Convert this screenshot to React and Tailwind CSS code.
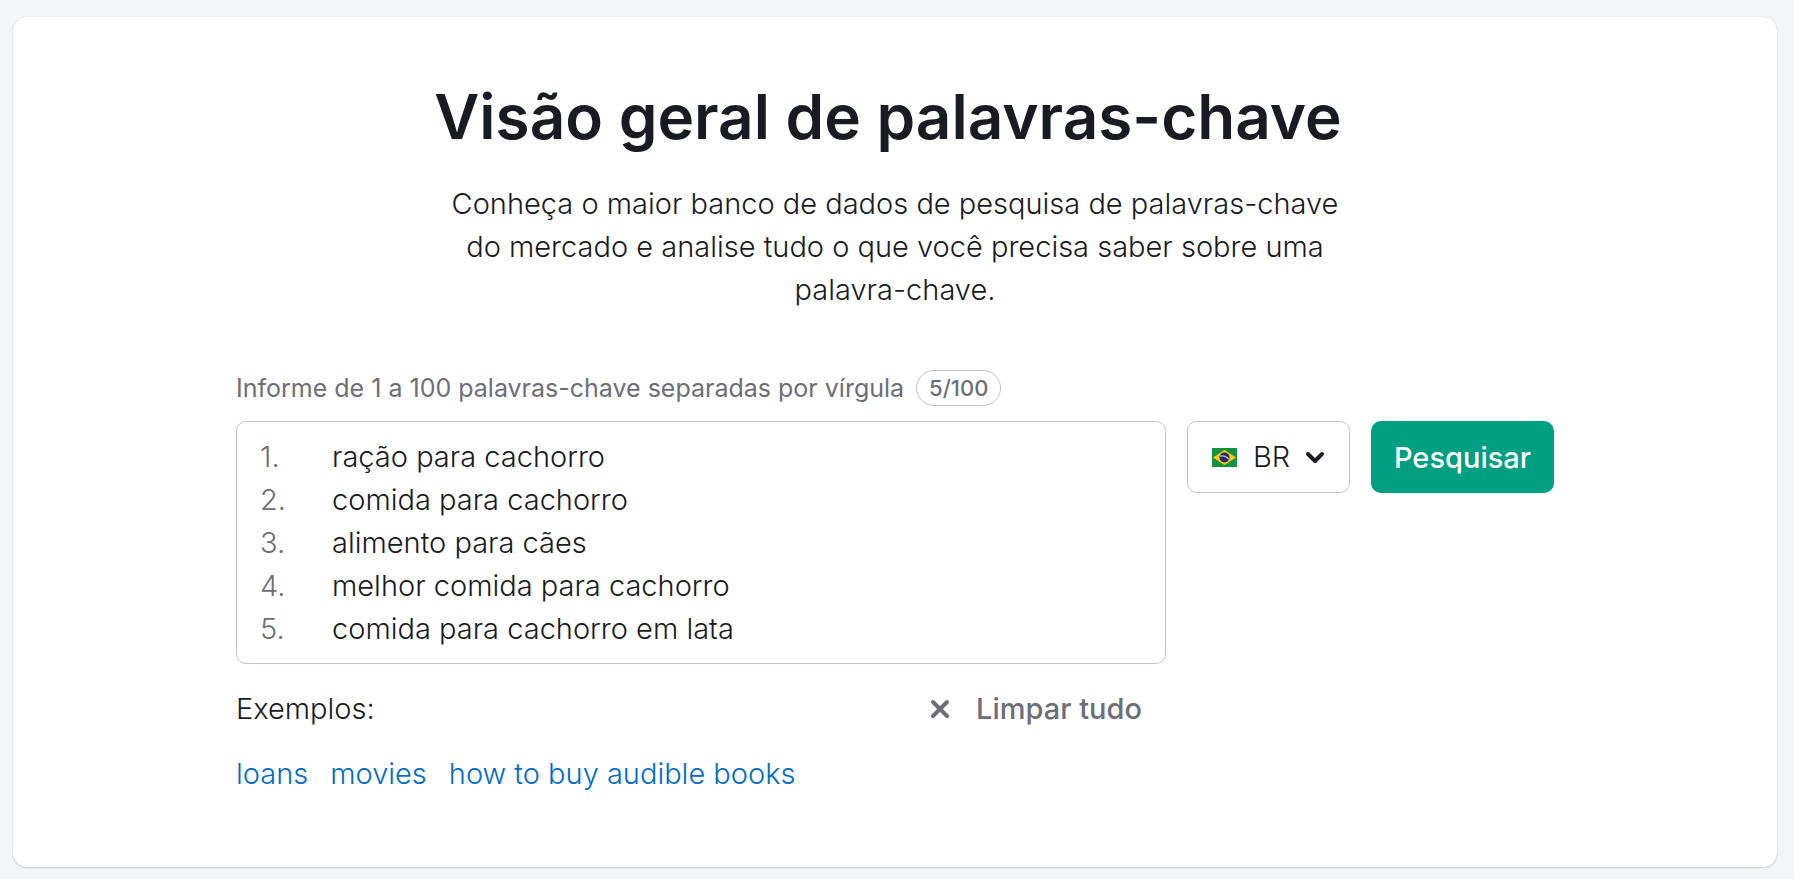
import { useState } from 'react';

const INITIAL_KEYWORDS = [
  'ração para cachorro',
  'comida para cachorro',
  'alimento para cães',
  'melhor comida para cachorro',
  'comida para cachorro em lata',
];

const EXAMPLES = ['loans', 'movies', 'how to buy audible books'];

const MAX_KEYWORDS = 100;

// =========================================================================
// App
//   Tela inicial da visão geral de palavras-chave: título, campo com as
//   palavras-chave numeradas, seletor de país e exemplos clicáveis.
// =========================================================================
export default function App() {
  const [text, setText] = useState(INITIAL_KEYWORDS.join('\n'));
  const [country, setCountry] = useState('BR');

  const lines = text.split('\n');
  const count = lines.filter(l => l.trim()).length;

  return (
    <div className="min-h-screen bg-[#f4f5f9] pt-[17px] pr-[17px] pb-[13px] pl-[13px] font-['Inter',sans-serif] text-[29px] leading-[43px] font-light text-[#191b23]">
      <main className="rounded-[14px] bg-white px-6 pt-[60px] pb-[72px] shadow-[0_0_1px_rgba(25,27,35,0.2),0_1px_2px_rgba(25,27,35,0.16)]">

        {/* Cabeçalho */}
        <header className="text-center">
          <h1 className="pr-[14px] text-[62px] leading-[80px] font-semibold">
            Visão geral de palavras-chave
          </h1>
          <p className="mx-auto mt-[25px] max-w-[900px]">
            Conheça o maior banco de dados de pesquisa de palavras-chave do mercado
            e analise tudo o que você precisa saber sobre uma palavra-chave.
          </p>
        </header>

        <form className="mx-auto mt-[59px] max-w-[1318px]" onSubmit={e => e.preventDefault()}>
          {/* Rótulo + contador */}
          <div className="flex items-center gap-3 text-[25px] leading-9 font-normal text-[#6c6e79]">
            <label htmlFor="keywords">
              Informe de 1 a {MAX_KEYWORDS} palavras-chave separadas por vírgula
            </label>
            <span className="flex h-9 items-center rounded-full border border-[#c4c3cf] px-3 text-[22px] font-medium">
              {count}/{MAX_KEYWORDS}
            </span>
          </div>

          <div className="mt-[15px] flex items-start gap-[21px]">
            <div className="min-w-0 flex-1">
              <div className="flex rounded-[10px] border border-[#c4c3cf] py-[13px] pl-[23px]">
                <ol className="w-[72px] shrink-0 text-[#6c6e79]" aria-hidden="true">
                  {lines.map((_, i) => <li key={i}>{i + 1}.</li>)}
                </ol>
                <textarea
                  id="keywords"
                  rows={Math.max(5, lines.length)}
                  value={text}
                  onChange={e => setText(e.target.value)}
                  spellCheck={false}
                  className="block min-w-0 flex-1 resize-none overflow-hidden bg-transparent outline-none"
                />
              </div>

              <div className="mt-[23px] flex items-center justify-between pr-6">
                <span>Exemplos:</span>
                <button
                  type="button"
                  onClick={() => setText('')}
                  className="flex items-center gap-[26px] font-medium text-[#6c6e79]"
                >
                  <CloseIcon />
                  Limpar tudo
                </button>
              </div>

              <div className="mt-[22px] flex gap-[22px] text-[#006dca]">
                {EXAMPLES.map(example => (
                  <a
                    key={example}
                    href="#"
                    onClick={e => { e.preventDefault(); setText(example); }}
                  >
                    {example}
                  </a>
                ))}
              </div>
            </div>

            {/* País */}
            <label className="flex h-[72px] items-center rounded-[10px] border border-[#c4c3cf] px-6 pb-[2px]">
              <BrazilFlag />
              <select
                aria-label="País"
                value={country}
                onChange={e => setCountry(e.target.value)}
                className="ml-4 w-[52px] appearance-none bg-transparent outline-none"
              >
                <option>BR</option>
                <option>US</option>
                <option>PT</option>
              </select>
              <ChevronIcon />
            </label>

            <button
              type="submit"
              className="h-[72px] rounded-[10px] bg-[#009f81] px-[23px] font-medium text-white"
            >
              Pesquisar
            </button>
          </div>
        </form>
      </main>
    </div>
  );
}

// ── Ícones ──────────────────────────────────────────────────────────────
function CloseIcon() {
  return (
    <svg className="h-5 w-5" viewBox="0 0 20 20" fill="none" stroke="currentColor" strokeWidth="4" strokeLinecap="round" aria-hidden="true">
      <path d="M3 3l14 14M17 3L3 17" />
    </svg>
  );
}

function ChevronIcon() {
  return (
    <svg className="h-5 w-5" viewBox="0 0 20 20" fill="none" stroke="currentColor" strokeWidth="4" strokeLinecap="round" strokeLinejoin="round" aria-hidden="true">
      <path d="M3 8l7 7 7-7" />
    </svg>
  );
}

function BrazilFlag() {
  return (
    <svg className="mt-[3px] h-[19px] w-[25px] shrink-0" viewBox="0 0 25 19" aria-hidden="true">
      <rect width="25" height="19" fill="#149443" />
      <path d="M12.5 2L24 9.5 12.5 17 1 9.5z" fill="#fecb0b" />
      <circle cx="12.5" cy="9.5" r="5" fill="#27276d" />
      <path d="M8 8.2c3.3-.8 6.8.4 9 3.1" fill="none" stroke="#b9bfd9" strokeWidth="1.2" />
    </svg>
  );
}
